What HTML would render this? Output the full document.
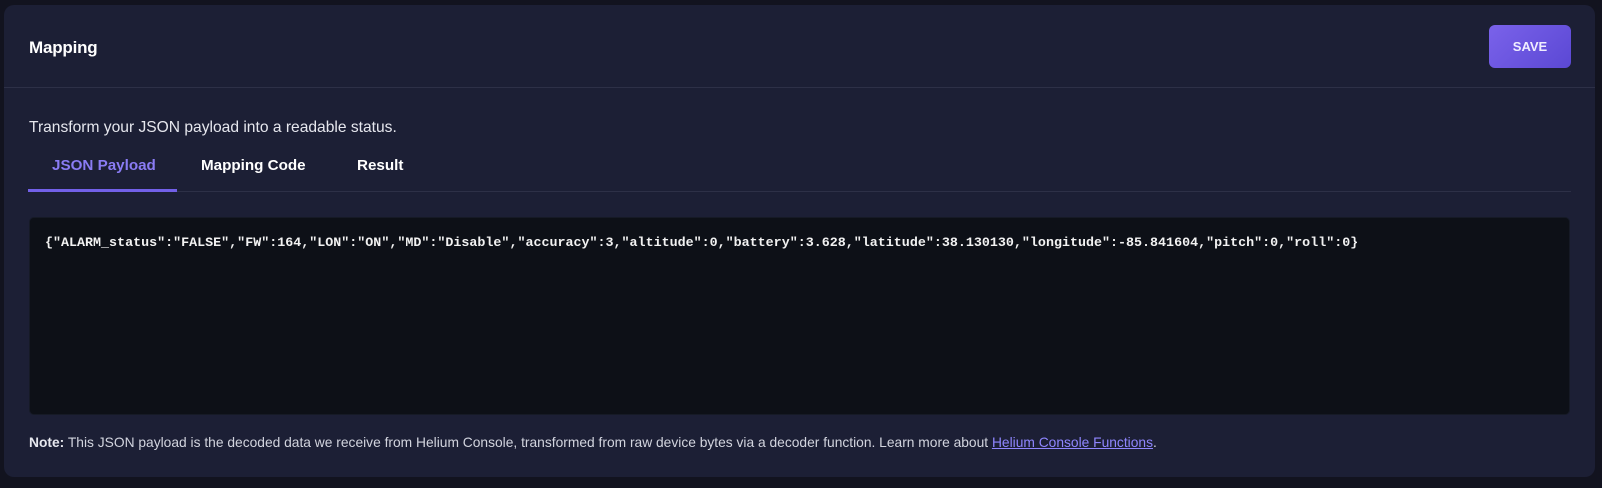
<!DOCTYPE html>
<html><head><meta charset="utf-8"><style>
*{box-sizing:border-box;margin:0;padding:0}
body{width:1602px;height:488px;background:#12131f;font-family:"Liberation Sans",sans-serif;color:#fff;position:relative;overflow:hidden}
.card{position:absolute;left:4px;top:5px;width:1591px;height:472px;background:#1c1f35;border-radius:10px}
.hdr{position:absolute;left:0;top:0;right:0;height:83px;border-bottom:1px solid #2d3047}
.title{position:absolute;left:25px;top:33px;font-size:17px;font-weight:bold;letter-spacing:-0.2px}
.save{position:absolute;left:1485px;top:20px;width:82px;height:43px;border-radius:6px;background:linear-gradient(135deg,#7a62ea,#5b48d4);font-size:13px;font-weight:bold;text-align:center;line-height:43px;color:#f0eeff}
.desc{position:absolute;left:25px;top:114px;font-size:15.6px;color:#e6e7ee}
.tab{position:absolute;top:152px;font-size:15.2px;font-weight:bold}
.ul{position:absolute;left:24px;top:184px;width:149px;height:3px;background:#7260e8}
.sep{position:absolute;left:24px;right:24px;top:186px;height:1px;background:#2d3047}
.code{position:absolute;left:25px;top:212px;width:1541px;height:198px;background:#0d1017;border-radius:5px;border:1px solid #161a26}
.code pre{position:absolute;left:15px;top:18px;font-family:"Liberation Mono",monospace;font-size:13.35px;color:#f2f2f2;font-weight:bold}
.note{position:absolute;left:25px;top:430px;font-size:13.8px;color:#d2d4de}
.note a{color:#8f86ff;text-decoration:underline}
</style></head><body>
<div class="card">
<div class="hdr"><div class="title">Mapping</div><div class="save">SAVE</div></div>
<div class="desc">Transform your JSON payload into a readable status.</div>
<div class="tab" style="left:48px;color:#8a7cf4">JSON Payload</div>
<div class="tab" style="left:197px">Mapping Code</div>
<div class="tab" style="left:353px">Result</div>
<div class="sep"></div>
<div class="ul"></div>
<div class="code"><pre>{"ALARM_status":"FALSE","FW":164,"LON":"ON","MD":"Disable","accuracy":3,"altitude":0,"battery":3.628,"latitude":38.130130,"longitude":-85.841604,"pitch":0,"roll":0}</pre></div>
<div class="note"><b style="color:#e6e7ee">Note:</b> This JSON payload is the decoded data we receive from Helium Console, transformed from raw device bytes via a decoder function. Learn more about <a>Helium Console Functions</a>.</div>
</div>
</body></html>
